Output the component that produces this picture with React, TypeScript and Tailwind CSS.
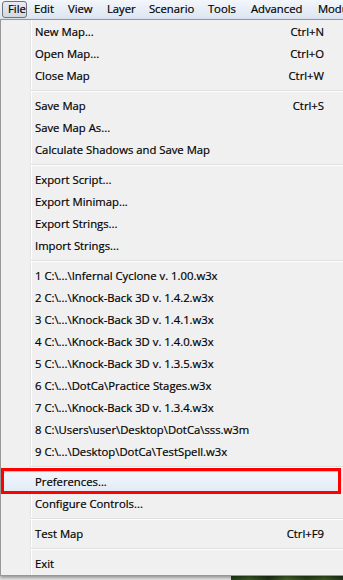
import React from "react";

type Item = { t: string; k?: string; hl?: boolean } | "sep";

const items: Item[] = [
  { t: "New Map...", k: "Ctrl+N" },
  { t: "Open Map...", k: "Ctrl+O" },
  { t: "Close Map", k: "Ctrl+W" },
  "sep",
  { t: "Save Map", k: "Ctrl+S" },
  { t: "Save Map As..." },
  { t: "Calculate Shadows and Save Map" },
  "sep",
  { t: "Export Script..." },
  { t: "Export Minimap..." },
  { t: "Export Strings..." },
  { t: "Import Strings..." },
  "sep",
  { t: "1 C:\\...\\Infernal Cyclone v. 1.00.w3x" },
  { t: "2 C:\\...\\Knock-Back 3D v. 1.4.2.w3x" },
  { t: "3 C:\\...\\Knock-Back 3D v. 1.4.1.w3x" },
  { t: "4 C:\\...\\Knock-Back 3D v. 1.4.0.w3x" },
  { t: "5 C:\\...\\Knock-Back 3D v. 1.3.5.w3x" },
  { t: "6 C:\\...\\DotCa\\Practice Stages.w3x" },
  { t: "7 C:\\...\\Knock-Back 3D v. 1.3.4.w3x" },
  { t: "8 C:\\Users\\user\\Desktop\\DotCa\\sss.w3m" },
  { t: "9 C:\\...\\Desktop\\DotCa\\TestSpell.w3x" },
  "sep",
  { t: "Preferences...", hl: true },
  { t: "Configure Controls..." },
  "sep",
  { t: "Test Map", k: "Ctrl+F9" },
  "sep",
  { t: "Exit" },
];

const bar = [
  { t: "Edit", w: "w-[34px]" },
  { t: "View", w: "w-[39px]" },
  { t: "Layer", w: "w-[42px]" },
  { t: "Scenario", w: "w-[59px]" },
  { t: "Tools", w: "w-[43px]" },
  { t: "Advanced", w: "w-[67px]" },
  { t: "Modules", w: "w-[60px]" },
];

export default function App() {
  return (
    <div
      className="relative w-[343px] h-[580px] overflow-hidden bg-[#f0f0f0] text-black [-webkit-text-stroke:0.2px_#000]"
      style={{ fontFamily: '"Open Sans", "Noto Sans", sans-serif' }}
    >
      {/* menu bar */}
      <div className="h-[19px] flex items-start pl-[2px] pt-[1px] bg-[linear-gradient(to_bottom,#f3f6fb,#dce5f1)] text-[11.3px] leading-[16px] whitespace-nowrap">
        <div className="w-[29px] h-[17px] border border-[#6f737a] rounded-[3px] bg-[linear-gradient(to_bottom,#e8ebf0,#d3d8e0)] pl-[5px] pb-[1px] flex items-center">
          File
        </div>
        {bar.map((b) => (
          <div key={b.t} className={`${b.w} shrink-0 h-[17px] pl-[7px] pb-[1px] flex items-center`}>
            {b.t}
          </div>
        ))}
      </div>

      {/* dropdown */}
      <div className="relative w-[345px] border-t border-l border-b border-[#979797] pt-[1px] bg-[linear-gradient(to_right,#f0f0f0_29px,#e2e3e3_29px,#e2e3e3_30px,#ffffff_30px,#ffffff_31px,#f0f0f0_31px)] shadow-[0_2px_3px_rgba(0,0,0,0.35)] text-[11.3px] whitespace-nowrap">
        {items.map((it, i) =>
          it === "sep" ? (
            <div key={i} className="h-[8px] flex items-center pl-[29px]">
              <div className="w-full h-[2px] border-t border-[#e0e0e0] border-b border-b-white" />
            </div>
          ) : (
            <div key={i} className="relative h-[22px] flex items-center justify-between pl-[34px] pr-[21px]">
              {it.hl && (
                <div className="absolute left-[2px] right-[4px] top-[0px] bottom-[0px] rounded-[3px] border border-[#a8c8ef] bg-[linear-gradient(to_bottom,#f3f7fc,#e1eaf6)]" />
              )}
              <span className="relative">{it.t}</span>
              {it.k && <span className="relative">{it.k}</span>}
            </div>
          )
        )}
      </div>

      {/* below the menu */}
      <div className="flex h-[4px]">
        <div className="w-[231px] bg-[#e9e9e9]" />
        <div className="flex-1 bg-[linear-gradient(to_right,#24401a,#3b5a26,#1f3515,#46652c,#2a4419,#3c5a22,#22381a)]" />
      </div>

      {/* red annotation box */}
      <div className="absolute left-[1px] top-[468px] w-[340px] h-[26px] border-[3px] border-[#ff0000] pointer-events-none" />
    </div>
  );
}
